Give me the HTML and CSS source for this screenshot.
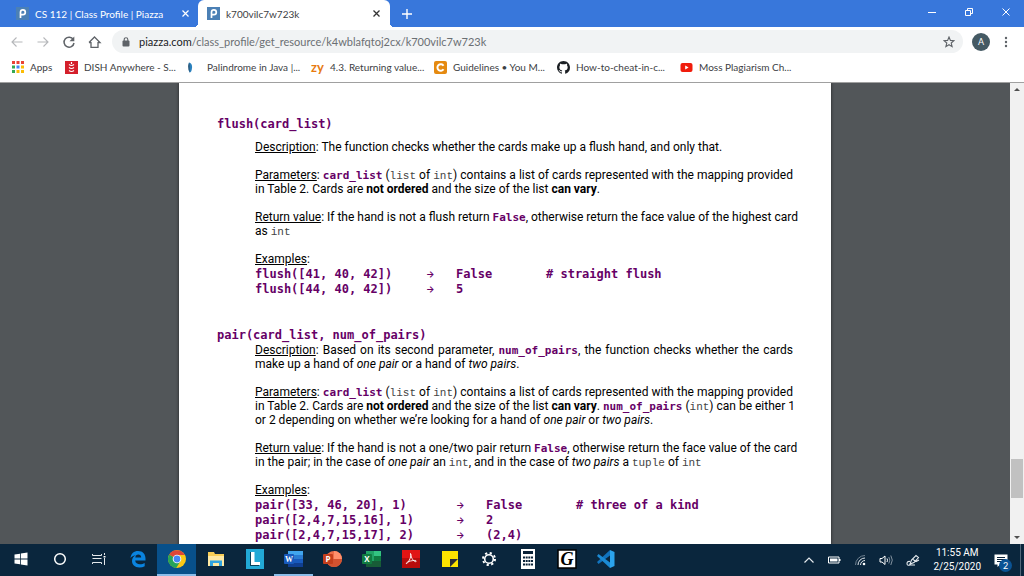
FILE: index.html
```html
<!DOCTYPE html>
<html lang="en">
<head>
    <meta charset="UTF-8">
    <meta name="viewport" content="width=device-width, initial-scale=1.0">
    <title>k700vilc7w723k</title>
    <link rel="stylesheet" href="styles.css">
</head>
<body>

    <!-- Tabs -->
    <header class="tab-bar">
        <div class="tab">
            <svg class="favicon" viewBox="0 0 13 13"><rect width="13" height="13" fill="#4b80b5"/><path d="M4.5 11V5.2a2.4 2.4 0 1 1 2.4 2.5H5" fill="none" stroke="#fff" stroke-width="1.7"/></svg>
            <span class="tab-title">CS 112 | Class Profile | Piazza</span>
            <button class="icon-btn" aria-label="Close tab"><svg width="9" height="9" viewBox="0 0 9 9"><path d="M1.5 1.5l6 6M7.5 1.5l-6 6" stroke="#fff" stroke-width="1.2"/></svg></button>
        </div>
        <div class="tab active">
            <svg class="favicon" viewBox="0 0 13 13"><rect width="13" height="13" fill="#4b80b5"/><path d="M4.5 11V5.2a2.4 2.4 0 1 1 2.4 2.5H5" fill="none" stroke="#fff" stroke-width="1.7"/></svg>
            <span class="tab-title">k700vilc7w723k</span>
            <button class="icon-btn" aria-label="Close tab"><svg width="9" height="9" viewBox="0 0 9 9"><path d="M1.5 1.5l6 6M7.5 1.5l-6 6" stroke="#333" stroke-width="1.3"/></svg></button>
        </div>
        <button class="icon-btn new-tab" aria-label="New tab"><svg width="12" height="12" viewBox="0 0 12 12"><path d="M6 1v10M1 6h10" stroke="#fff" stroke-width="1.4"/></svg></button>
        <div class="window-buttons">
            <button class="icon-btn" aria-label="Minimize"><svg width="10" height="10" viewBox="0 0 10 10"><path d="M1 5.5h8" stroke="#fff"/></svg></button>
            <button class="icon-btn" aria-label="Restore"><svg width="10" height="10" viewBox="0 0 10 10"><path d="M1.5 3.5h5v5h-5zM3.5 3.5v-2h5v5h-2" fill="none" stroke="#fff"/></svg></button>
            <button class="icon-btn" aria-label="Close"><svg width="10" height="10" viewBox="0 0 10 10"><path d="M1.5 1.5l7 7M8.5 1.5l-7 7" stroke="#fff"/></svg></button>
        </div>
    </header>

    <!-- Address bar -->
    <div class="toolbar">
        <button class="icon-btn" aria-label="Back"><svg width="14" height="14" viewBox="0 0 14 14"><path d="M12.5 7H2M6.5 2.5L2 7l4.5 4.5" fill="none" stroke="#b5b7ba" stroke-width="1.1"/></svg></button>
        <button class="icon-btn" aria-label="Forward"><svg width="14" height="14" viewBox="0 0 14 14"><path d="M1.5 7H12M7.5 2.5L12 7l-4.5 4.5" fill="none" stroke="#b5b7ba" stroke-width="1.1"/></svg></button>
        <button class="icon-btn" aria-label="Reload"><svg width="14" height="14" viewBox="0 0 14 14"><path d="M11.3 4.5A5 5 0 1 0 12 8" fill="none" stroke="#5f6368" stroke-width="1.5"/><path d="M12.3 1.5v4.8H7.5z" fill="#5f6368"/></svg></button>
        <button class="icon-btn" aria-label="Home"><svg width="14" height="14" viewBox="0 0 14 14"><path d="M3 7v5.3h7V7M1 7.5L6.5 2 12 7.5H10M3 7.5H1" fill="none" stroke="#5f6368" stroke-width="1.3"/></svg></button>
        <div class="omnibox">
            <svg width="8" height="10" viewBox="0 0 8 10"><rect x="0.5" y="3.5" width="7" height="6" rx="1" fill="#5f6368"/><path d="M2.2 4V2.5a1.8 1.8 0 0 1 3.6 0V4" fill="none" stroke="#5f6368" stroke-width="1.1"/></svg>
            <a class="url" href="#"><span class="host">piazza.com</span>/class_profile/get_resource/k4wblafqtoj2cx/k700vilc7w723k</a>
            <button class="icon-btn" aria-label="Bookmark this page"><svg width="12" height="12" viewBox="0 0 12 12"><path d="M6 1l1.4 3.4 3.6.3-2.8 2.3.9 3.6L6 8.7l-3.1 1.9.9-3.6L1 4.7l3.6-.3z" fill="none" stroke="#5f6368" stroke-width="1.1"/></svg></button>
        </div>
        <button class="avatar" aria-label="Account">A</button>
        <button class="icon-btn menu" aria-label="Menu"><svg width="4" height="12" viewBox="0 0 4 12" fill="#5f6368"><circle cx="2" cy="2" r="1.2"/><circle cx="2" cy="6" r="1.2"/><circle cx="2" cy="10" r="1.2"/></svg></button>
    </div>

    <nav class="bookmarks">
        <a href="#" class="apps">
            <svg width="12" height="12" viewBox="0 0 12 12"><path d="M0 0h3v3H0zM4.5 0h3v3h-3zM9 0h3v3H9z" fill="#e94335"/><path d="M0 4.5h3v3H0z" fill="#34a853"/><path d="M4.5 4.5h3v3h-3z" fill="#4285f4"/><path d="M9 4.5h3v3H9zM4.5 9h3v3h-3zM9 9h3v3H9z" fill="#fbbc05"/><path d="M0 9h3v3H0z" fill="#34a853"/></svg>
            Apps</a>
        <a href="#">
            <svg width="13" height="13" viewBox="0 0 13 13"><rect width="13" height="13" fill="#d4202b"/><path d="M4 3.5q2.5 2 5 0M4 6.5q2.5 2 5 0M4 9.5q2.5 2 5 0M6.5 1v2" fill="none" stroke="#fff" stroke-width="1.2"/></svg>
            DISH Anywhere - S...</a>
        <a href="#">
            <svg width="13" height="13" viewBox="0 0 13 13"><path d="M1 1.5q3.5 1 3 5.5t-2.5 4.5q-2-5-.5-10z" fill="#2a80bd"/><path d="M1 1.5q-1.5 5 .5 10V4z" fill="#27455f"/></svg>
            Palindrome in Java |...</a>
        <a href="#">
            <span class="zy-logo">zy</span>
            4.3. Returning value...</a>
        <a href="#">
            <svg width="13" height="13" viewBox="0 0 13 13"><rect width="13" height="13" rx="2" fill="#e58a10"/><path d="M9.5 4.7A3.3 3.3 0 1 0 9.5 8.3" fill="none" stroke="#fff" stroke-width="2"/></svg>
            Guidelines • You M...</a>
        <a href="#">
            <svg width="13" height="13" viewBox="0 0 16 16"><path fill="#1b1f23" d="M8 0C3.58 0 0 3.58 0 8c0 3.54 2.29 6.53 5.47 7.59.4.07.55-.17.55-.38v-1.49c-2.01.37-2.53-.49-2.69-.94-.09-.23-.48-.94-.82-1.13-.28-.15-.68-.52-.01-.53.63-.01 1.08.58 1.23.82.72 1.21 1.87.87 2.33.66.07-.52.28-.87.51-1.07-1.78-.2-3.64-.89-3.64-3.95 0-.87.31-1.59.82-2.15-.08-.2-.36-1.02.08-2.12 0 0 .67-.21 2.2.82a7.6 7.6 0 0 1 4 0c1.53-1.04 2.2-.82 2.2-.82.44 1.1.16 1.92.08 2.12.51.56.82 1.27.82 2.15 0 3.07-1.87 3.75-3.65 3.95.29.25.54.73.54 1.48v2.2c0 .21.15.46.55.38A8 8 0 0 0 16 8c0-4.42-3.58-8-8-8z"/></svg>
            How-to-cheat-in-c...</a>
        <a href="#">
            <svg width="13" height="13" viewBox="0 0 13 13"><rect x="0.5" y="2" width="12" height="9" rx="2" fill="#f01c0c"/><path d="M5.2 4.5v4l3.4-2z" fill="#fff"/></svg>
            Moss Plagiarism Ch...</a>
    </nav>

    <!-- PDF viewer -->
    <main class="viewer">
        <div class="backdrop">
            <article class="page">
                <section class="flush">
                    <h2><code>flush(card_list)</code></h2>
                    <div class="body">
                        <p><u>Description</u>: The function checks whether the cards make up a flush hand, and only that.</p>
                        <p><span class="full"><u>Parameters</u>: <code>card_list</code> (<code class="type">list</code> of <code class="type">int</code>) contains a list of cards represented with the mapping provided</span>
                        in Table 2. Cards are <b>not ordered</b> and the size of the list <b>can vary</b>.</p>
                        <p><span class="full"><u>Return value</u>: If the hand is not a flush return <code>False</code>, otherwise return the face value of the highest card</span>
                        as <code class="type">int</code></p>
                        <p><u>Examples</u>:</p>
                        <div class="examples">
                            <code>flush([41, 40, 42])</code><code class="arrow">→</code><code>False</code><code># straight flush</code>
                            <code>flush([44, 40, 42])</code><code class="arrow">→</code><code>5</code><code></code>
                        </div>
                    </div>
                </section>

                <section class="pair">
                    <h2><code>pair(card_list, num_of_pairs)</code></h2>
                    <div class="body">
                        <p><span class="full"><u>Description</u>: Based on its second parameter, <code>num_of_pairs</code>, the function checks whether the cards</span>
                        make up a hand of <i>one pair</i> or a hand of <i>two pairs</i>.</p>
                        <p><span class="full"><u>Parameters</u>: <code>card_list</code> (<code class="type">list</code> of <code class="type">int</code>) contains a list of cards represented with the mapping provided</span>
                        <span class="full">in Table 2. Cards are <b>not ordered</b> and the size of the list <b>can vary</b>. <code>num_of_pairs</code> (<code class="type">int</code>) can be either 1</span>
                        or 2 depending on whether we’re looking for a hand of <i>one pair</i> or <i>two pairs</i>.</p>
                        <p><span class="full"><u>Return value</u>: If the hand is not a one/two pair return <code>False</code>, otherwise return the face value of the card</span>
                        in the pair; in the case of <i>one pair</i> an <code class="type">int</code>, and in the case of <i>two pairs</i> a <code class="type">tuple</code> of <code class="type">int</code></p>
                        <p><u>Examples</u>:</p>
                        <div class="examples wide">
                            <code>pair([33, 46, 20], 1)</code><code class="arrow">→</code><code>False</code><code># three of a kind</code>
                            <code>pair([2,4,7,15,16], 1)</code><code class="arrow">→</code><code>2</code><code></code>
                            <code>pair([2,4,7,15,17], 2)</code><code class="arrow">→</code><code>(2,4)</code><code></code>
                        </div>
                    </div>
                </section>
            </article>
        </div>
        <div class="scrollbar">
            <svg width="8" height="5" viewBox="0 0 8 5"><path d="M1 4l3-3 3 3z" fill="#505050"/></svg>
            <div class="track"><div class="thumb"></div></div>
            <svg width="8" height="5" viewBox="0 0 8 5"><path d="M1 1l3 3 3-3z" fill="#505050"/></svg>
        </div>
    </main>

    <!-- Windows taskbar -->
    <footer class="taskbar">
        <button class="task" aria-label="Start"><svg width="14" height="14" viewBox="0 0 14 14"><path d="M0.5 2.5L6 1.7v4.9H.5zM6.8 1.6l6.7-1v6H6.8zM.5 7.4H6v4.9l-5.5-.8zM6.8 7.4h6.7v6l-6.7-1z" fill="#fff"/></svg></button>
        <button class="task" aria-label="Cortana"><svg width="14" height="14" viewBox="0 0 14 14"><circle cx="7" cy="7" r="5.3" fill="none" stroke="#fff" stroke-width="1.5"/></svg></button>
        <button class="task" aria-label="Task View"><svg width="14" height="14" viewBox="0 0 14 14"><path d="M.5 2v1.5h9V2M.5 6.5h9M.5 12v-1.5h9V12M12.5 1v2M12.5 6v7" fill="none" stroke="#e3e8ec"/><path d="M11.5 4h2v1.5h-2z" fill="#fff"/></svg></button>
        <button class="task" aria-label="Edge"><svg width="18" height="18" viewBox="0 0 18 18"><path d="M1.5 8C2 3.5 5 1 9 1c5 0 7.5 3.5 7.5 7.5v2H6.2c.2 2.6 2.2 3.8 4.8 3.8 1.8 0 3.3-.5 4.7-1.3v3.2c-1.5.8-3.3 1.2-5.2 1.2-5 0-7.5-3-7.5-6.5 0-3 1.8-5 4-6C5 5.5 3 6 1.5 8zM6.3 7.5h5.9C12.2 5.5 11 4.5 9.3 4.5S6.5 5.7 6.3 7.5z" fill="#0a84e0"/></svg></button>
        <button class="task current" aria-label="Chrome"><svg width="18" height="18" viewBox="0 0 18 18"><circle cx="9" cy="9" r="9" fill="#fbc916"/><path d="M1.2 4.5A9 9 0 0 0 8.2 18L12.5 11 9 9z" fill="#27a35a"/><path d="M9 9L1.2 4.5A9 9 0 0 1 16.8 5H9z" fill="#dd4638"/><circle cx="9" cy="9" r="4.3" fill="#fff"/><circle cx="9" cy="9" r="3.4" fill="#4486f4"/></svg></button>
        <button class="task" aria-label="File Explorer"><svg width="18" height="16" viewBox="0 0 18 16"><path d="M1 1h6l1 2h9v12H1z" fill="#f8ce57"/><path d="M1 5h16v10H1z" fill="#ffe9a4"/><path d="M3 15V9.5h12V15h-3v-3H6v3z" fill="#31a3df"/></svg></button>
        <button class="task" aria-label="LockDown Browser"><svg width="20" height="20" viewBox="0 0 20 20"><rect x="1" width="18" height="20" fill="#22a9d6"/><path d="M5 3h4v11h5v3H5z" fill="#08445c"/><path d="M6 3h3.5v10H15v3H6z" fill="#fff"/></svg></button>
        <button class="task open" aria-label="Word"><svg width="20" height="18" viewBox="0 0 20 18"><rect x="4" y="1" width="15" height="5" fill="#41a5ee"/><rect x="4" y="5" width="15" height="4" fill="#2b7cd3"/><rect x="4" y="9" width="15" height="4" fill="#185abd"/><rect x="4" y="13" width="15" height="4" fill="#103f91"/><rect y="4" width="10" height="10" rx="1" fill="#185abd"/><text x="5" y="12" class="badge-letter serif">W</text></svg></button>
        <button class="task" aria-label="PowerPoint"><svg width="20" height="18" viewBox="0 0 20 18"><circle cx="11" cy="9" r="8" fill="#ed6c47"/><path d="M11 1a8 8 0 0 1 8 8h-8z" fill="#ff8f6b"/><path d="M3 9a8 8 0 0 0 16 0z" fill="#d35230"/><rect y="4" width="10" height="10" rx="1" fill="#c43e1c"/><text x="5" y="12" class="badge-letter">P</text></svg></button>
        <button class="task" aria-label="Excel"><svg width="20" height="18" viewBox="0 0 20 18"><rect x="4" y="1" width="8" height="16" fill="#21a366"/><rect x="12" y="1" width="7" height="5" fill="#33c481"/><rect x="12" y="6" width="7" height="5" fill="#107c41"/><rect x="4" y="11" width="15" height="6" fill="#185c37"/><rect y="4" width="10" height="10" rx="1" fill="#107c41"/><text x="5" y="12" class="badge-letter">X</text></svg></button>
        <button class="task" aria-label="Acrobat"><svg width="18" height="18" viewBox="0 0 18 18"><rect width="18" height="18" fill="#b80c0c"/><path d="M0 0h18v8H0z" fill="#e11414"/><path d="M8.5 3.5c1.5 2-1.5 8-3.5 10-1.5.5-1-1.5 3.5-2.5s6.5-.5 5.5.5-5-2.5-5.5-8z" fill="none" stroke="#fff" stroke-width=".9"/></svg></button>
        <button class="task" aria-label="Sticky Notes"><svg width="18" height="18" viewBox="0 0 18 18"><path d="M1 1h16v16H1z" fill="#fde300"/><path d="M9 9h8l-8 8z" fill="#2b2d35"/></svg></button>
        <button class="task" aria-label="Settings"><svg width="16" height="16" viewBox="0 0 16 16"><circle cx="8" cy="8" r="4.3" fill="none" stroke="#fff" stroke-width="1.6"/><circle cx="8" cy="8" r="6" fill="none" stroke="#fff" stroke-width="2" stroke-dasharray="2.2 2.51"/></svg></button>
        <button class="task" aria-label="Calculator"><svg width="14" height="20" viewBox="0 0 14 20"><rect width="14" height="20" fill="#fff"/><path d="M2 2h10v3H2z" fill="#0a2238"/><path d="M2 8.5h10M2 12h10M2 15.5h10" stroke="#0a2238" stroke-width="2" stroke-dasharray="2 .67"/></svg></button>
        <button class="task" aria-label="G"><svg width="20" height="20" viewBox="0 0 20 20"><rect x="1" y="1" width="18" height="18" fill="#fff" stroke="#000" stroke-width="1.5"/><text x="10" y="16" class="g-letter">G</text></svg></button>
        <button class="task" aria-label="Visual Studio Code"><svg width="20" height="20" viewBox="0 0 20 20"><path d="M14 1l4.5 2v14L14 19z" fill="#2ba4ee"/><path d="M14 1L1 13l1.5 2L14 6.5z" fill="#1173bd"/><path d="M14 19L1 7l1.5-2L14 13.5z" fill="#1b8ad4"/></svg></button>

        <div class="tray">
            <svg width="12" height="8" viewBox="0 0 12 8"><path d="M1.5 6.5L6 2l4.5 4.5" fill="none" stroke="#e6ebef" stroke-width="1.2"/></svg>
            <svg width="13" height="8" viewBox="0 0 13 8"><path d="M.5 1h10.5v6H.5z" fill="none" stroke="#fff"/><path d="M2 2.5h7.5v3H2zM11 3h1.5v2H11z" fill="#fff"/></svg>
            <svg width="12" height="12" viewBox="0 0 12 12"><path d="M1.5 11A9.5 9.5 0 0 1 11 1.5" fill="none" stroke="#6f8190"/><path d="M4 11a7 7 0 0 1 7-7M6.5 11A4.5 4.5 0 0 1 11 6.5" fill="none" stroke="#dfe5ea"/><circle cx="10" cy="10" r="1.3" fill="#fff"/></svg>
            <svg width="14" height="12" viewBox="0 0 14 12"><path d="M1 4.5h2L6 2v8.5L3 8H1z" fill="none" stroke="#fff"/><path d="M8 4.5q1 1.7 0 3.5" fill="none" stroke="#fff"/><path d="M9.8 3q2 3 0 6.5M11.8 1.5q3 4.5 0 9.5" fill="none" stroke="#8493a0"/></svg>
            <svg width="14" height="13" viewBox="0 0 14 13"><path d="M4 7.5Q1 7 1 9.5t3 1.5h5M4 10l1.5-4L10 1.5l2.5 2L8 8.5zM7 5.5l3 2 3-1.5" fill="none" stroke="#e6ebef" stroke-width="1.1"/></svg>
            <div class="clock"><span>11:55 AM</span><span>2/25/2020</span></div>
            <div class="notifications">
                <svg width="14" height="13" viewBox="0 0 14 13"><path d="M.5.5h13v10H6L3.5 13v-2.5h-3z" fill="#fff"/><path d="M3 3.5h8M3 5.5h8M3 7.5h5" stroke="#0a2238"/></svg>
                <span class="count">2</span>
            </div>
        </div>
    </footer>

</body>
</html>
```
FILE: styles.css
```css
:root {
    --chrome-blue: #3877db;
    --code-color: #660066;
    --viewer-bg: #525659;
    --taskbar-bg: #0a263d;
    --ui-font: Lato, 'Open Sans', sans-serif;
}

* {
    margin: 0;
    padding: 0;
    box-sizing: border-box;
}

body {
    height: 100vh;
    display: flex;
    flex-direction: column;
    overflow: hidden;
    background-color: white;
    font-family: var(--ui-font);
    font-size: 10px;
}

svg {
    display: block;
    flex: none;
}

a {
    color: inherit;
    text-decoration: none;
}

button {
    background: none;
    border: none;
    font-family: inherit;
    cursor: pointer;
}

.icon-btn {
    display: flex;
    align-items: center;
    justify-content: center;
    flex: none;
}

/* Tabs */
.tab-bar {
    display: flex;
    align-items: center;
    height: 27px;
    background-color: var(--chrome-blue);
    color: white;
}

.tab {
    display: flex;
    align-items: center;
    gap: 6px;
    width: 198px;
    height: 27px;
    padding: 0 8px 0 16px;
}

.tab.active {
    position: relative;
    width: 192px;
    padding: 0 9px;
    background-color: white;
    color: #3c4043;
    border-radius: 6px 6px 0 0;
}

/* Curved feet of the active tab */
.tab.active::before,
.tab.active::after {
    content: '';
    position: absolute;
    bottom: 0;
    width: 4px;
    height: 4px;
}

.tab.active::before {
    right: 100%;
    background: radial-gradient(circle at 0 0, transparent 4px, white 4px);
}

.tab.active::after {
    left: 100%;
    background: radial-gradient(circle at 100% 0, transparent 4px, white 4px);
}

.favicon {
    width: 13px;
    height: 13px;
}

.tab-title {
    flex: 1;
    white-space: nowrap;
    overflow: hidden;
}

.new-tab {
    margin-left: 11px;
}

.window-buttons {
    display: flex;
    gap: 27px;
    margin-left: auto;
    padding: 0 13px 4px 0;
}

/* Address bar */
.toolbar {
    display: flex;
    align-items: center;
    gap: 12px;
    height: 27px;
    padding: 2px 16px 0 10px;
}

.omnibox {
    display: flex;
    align-items: center;
    gap: 9px;
    flex: 1;
    height: 23px;
    margin-left: -2px;
    padding: 0 8px 0 10px;
    background-color: #f1f3f4;
    border-radius: 12px;
    font-size: 11px;
}

.url {
    flex: 1;
    color: #6b6f73;
    white-space: nowrap;
}

.host {
    color: #202124;
}

.avatar {
    width: 18px;
    height: 18px;
    margin-left: -3px;
    border-radius: 50%;
    background-color: #455a64;
    color: white;
    font-size: 9px;
}

.menu {
    margin-left: 2px;
}

/* Bookmarks */
.bookmarks {
    display: flex;
    align-items: center;
    height: 28px;
    padding: 0 12px 2px;
    color: #3c4043;
    white-space: nowrap;
}

.bookmarks a {
    display: flex;
    align-items: center;
    gap: 6px;
    width: 123px;
}

.bookmarks .apps {
    width: 53px;
}

.zy-logo {
    width: 13px;
    color: #e77b12;
    font-size: 13px;
    font-weight: bold;
    line-height: 13px;
}

/* PDF viewer */
.viewer {
    display: flex;
    flex: 1;
    min-height: 0;
    border-top: 1px solid #a0a0a0;
}

.backdrop {
    flex: 1;
    overflow: hidden;
    background-color: var(--viewer-bg);
}

.page {
    width: 652px;
    min-height: 100%;
    margin: 0 auto;
    padding: 34px 38px;
    background-color: white;
    box-shadow: 0 0 3px #222;
    color: #000;
    font-family: Roboto, sans-serif;
    font-size: 12px;
    line-height: 14px;
}

.page h2 {
    font-size: 12px;
    line-height: 14px;
}

.flush h2 {
    margin-bottom: 9px;
}

.flush {
    margin-bottom: 32px;
}

.pair h2 {
    margin-bottom: 1px;
}

.body {
    padding-left: 38px;
}

.body p + p {
    margin-top: 14px;
}

/* A line that fills the column on both sides */
.full {
    display: block;
    text-align: justify;
    text-align-last: justify;
    white-space: nowrap;
}

code {
    font-family: 'DejaVu Sans Mono', monospace;
    font-size: 12px;
    font-weight: bold;
    line-height: 12px;
    color: var(--code-color);
}

p code {
    font-size: 11px;
}

code.type {
    font-family: 'Liberation Mono', monospace;
    font-weight: normal;
    color: #444;
}

code.arrow {
    font-family: Inter, sans-serif;
    font-size: 9px;
}

.examples {
    display: grid;
    grid-template-columns: 171px 30px 90px 1fr;
    grid-auto-rows: 15px;
    align-items: center;
    white-space: pre;
}

.examples.wide {
    grid-template-columns: 201px 30px 90px 1fr;
}

.scrollbar {
    display: flex;
    flex-direction: column;
    align-items: center;
    width: 14px;
    padding: 4px 0;
    background-color: #f1f1f1;
}

.track {
    display: flex;
    flex-direction: column;
    justify-content: flex-end;
    flex: 1;
    width: 12px;
    padding-bottom: 37px;
}

.thumb {
    height: 39px;
    background-color: #c1c1c1;
}

/* Taskbar */
.taskbar {
    display: flex;
    align-items: stretch;
    height: 32px;
    padding-left: 1px;
    background-color: var(--taskbar-bg);
    color: white;
}

.task {
    display: flex;
    align-items: center;
    justify-content: center;
    width: 39px;
    border-bottom: 2px solid transparent;
}

.task.current {
    background-color: #08508a;
    border-bottom-color: #8abdea;
}

.task.open {
    border-bottom-color: #8abdea;
}

.badge-letter {
    fill: white;
    font-family: 'Open Sans', sans-serif;
    font-size: 8px;
    font-weight: bold;
    text-anchor: middle;
}

.badge-letter.serif {
    font-family: 'Liberation Serif', serif;
}

.g-letter {
    fill: black;
    font-family: 'Liberation Serif', serif;
    font-size: 18px;
    font-style: italic;
    font-weight: bold;
    text-anchor: middle;
}

.tray {
    display: flex;
    align-items: center;
    gap: 13px;
    margin-left: auto;
    margin-right: 3px;
    padding-right: 12px;
    border-right: 1px solid #52697b;
}

.clock {
    display: flex;
    flex-direction: column;
    align-items: center;
    font-family: Roboto, sans-serif;
    line-height: 14px;
}

.notifications {
    position: relative;
}

.count {
    position: absolute;
    left: 5px;
    top: 5px;
    width: 13px;
    height: 13px;
    border-radius: 50%;
    background-color: #0b5394;
    font-size: 9px;
    line-height: 13px;
    text-align: center;
}
```
